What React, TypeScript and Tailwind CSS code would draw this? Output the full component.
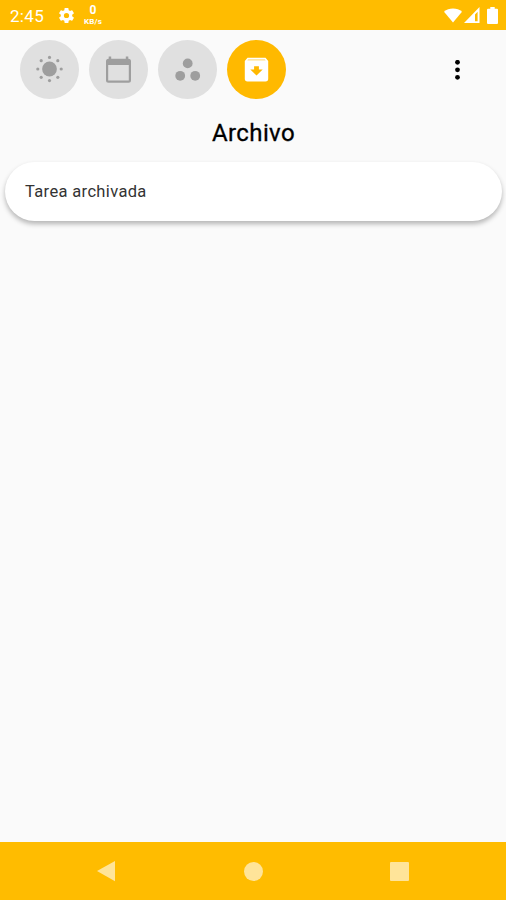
import type { ReactNode } from "react"
import clsx from "clsx"

function StatusBar() {
  return (
    <div className="flex h-[30px] items-center bg-[#ffbc00] pr-2 pl-2.5 text-white">
      <span className="w-[47px] pt-0.5 text-[17px] leading-none tracking-[0.3px]">2:45</span>
      <svg className="mt-px h-[19px] w-[19px]" viewBox="0 0 24 24" fill="currentColor">
        <path d="M19.14 12.94c.04-.3.06-.61.06-.94s-.02-.64-.07-.94l2.03-1.58a.49.49 0 0 0 .12-.61l-1.92-3.32a.49.49 0 0 0-.59-.22l-2.39.96c-.5-.38-1.03-.7-1.62-.94l-.36-2.54a.48.48 0 0 0-.48-.41h-3.84c-.24 0-.43.17-.47.41l-.36 2.54c-.59.24-1.13.57-1.62.94l-2.39-.96a.48.48 0 0 0-.59.22L2.74 8.87c-.12.21-.08.47.12.61l2.03 1.58c-.05.3-.09.63-.09.94s.02.64.07.94l-2.03 1.58a.49.49 0 0 0-.12.61l1.92 3.32c.12.22.37.29.59.22l2.39-.96c.5.38 1.03.7 1.62.94l.36 2.54c.05.24.24.41.48.41h3.84c.24 0 .44-.17.47-.41l.36-2.54c.59-.24 1.13-.56 1.62-.94l2.39.96c.22.08.47 0 .59-.22l1.92-3.32a.48.48 0 0 0-.12-.61l-2.01-1.58zM12 15.3A3.3 3.3 0 1 1 12 8.7a3.3 3.3 0 0 1 0 6.6z" />
      </svg>
      <div className="ml-[7px] flex w-5 flex-col items-center">
        <span className="text-[12px] leading-[14px] font-bold">0</span>
        <span className="text-[8px] leading-[10px] font-bold tracking-[0.2px]">KB/s</span>
      </div>
      <div className="ml-auto flex items-center">
        <svg className="h-[15px] w-[18px]" viewBox="0 0 18 15" fill="currentColor">
          <path d="M9 14.5 0 3.7C2.4 1.7 5.6.5 9 .5s6.6 1.2 9 3.2z" />
        </svg>
        <svg className="ml-0.5 h-4 w-4" viewBox="0 0 16 16" fill="currentColor">
          <path fillRule="evenodd" d="M0 16 15.5 0v16zM11 7.5v6.8h2.6V4.8z" />
        </svg>
        <svg className="ml-[7px] h-[17px] w-[11px]" viewBox="0 0 11 17" fill="currentColor">
          <path d="M3.3 0h4.4v1.7H10a1 1 0 0 1 1 1V16a1 1 0 0 1-1 1H1a1 1 0 0 1-1-1V2.7a1 1 0 0 1 1-1h2.3z" />
        </svg>
      </div>
    </div>
  )
}

function TabButton({ label, active, children }: { label: string; active?: boolean; children: ReactNode }) {
  return (
    <button
      aria-label={label}
      className={clsx(
        "flex h-[59px] w-[59px] items-center justify-center rounded-full",
        active ? "bg-[#ffb900] text-white" : "bg-[#e0e0e0] text-[#9e9e9e]",
      )}
    >
      <svg className="h-[29px] w-[29px]" viewBox="0 0 29 29" fill="currentColor">
        {children}
      </svg>
    </button>
  )
}

function Tabs() {
  return (
    <div className="flex items-center gap-2.5">
      <TabButton label="Hoy">
        <circle cx="14.5" cy="14" r="7.4" />
        <circle cx="14.5" cy="2.4" r="1.6" />
        <circle cx="22.8" cy="5.7" r="1.6" />
        <circle cx="26.2" cy="14" r="1.6" />
        <circle cx="22.8" cy="22.3" r="1.6" />
        <circle cx="14.5" cy="25.6" r="1.6" />
        <circle cx="6.2" cy="22.3" r="1.6" />
        <circle cx="2.8" cy="14" r="1.6" />
        <circle cx="6.2" cy="5.7" r="1.6" />
      </TabButton>
      <TabButton label="Calendario">
        <path
          fillRule="evenodd"
          d="M4.7 1.5h2.5v2.3h14.600V1.5h2.500v2.300h.2a2.500 2.500 0 0 1 2.500 2.500v18.900a2.500 2.500 0 0 1-2.500 2.500H4.500A2.500 2.500 0 0 1 2 25.200V6.300a2.500 2.500 0 0 1 2.500-2.500h.2zM4.200 10v15.500h20.600V10z"
        />
      </TabButton>
      <TabButton label="Grupos">
        <circle cx="14.7" cy="8.4" r="4.9" />
        <circle cx="7.2" cy="20.8" r="4.9" />
        <circle cx="22.2" cy="20.8" r="4.9" />
      </TabButton>
      <TabButton label="Archivo" active>
        <path
          fillRule="evenodd"
          d="M5.5 2.8h18l2.700 3.200v17.700a2.700 2.700 0 0 1-2.700 2.700h-18a2.700 2.700 0 0 1-2.700-2.700V6zM12.100 11.200v3.200H8.300l6.200 6.200 6.200-6.200h-3.800v-3.200z"
        />
        <path d="M6.200 4.300h16.600l.9 1.200H5.300z" fill="#ffdf85" />
      </TabButton>
    </div>
  )
}

function MenuButton() {
  return (
    <button aria-label="Menú" className="flex h-10 w-10 items-center justify-center text-black">
      <svg className="h-5 w-2" viewBox="0 0 8 20" fill="currentColor">
        <circle cx="3.5" cy="2.3" r="2.4" />
        <circle cx="3.5" cy="9.8" r="2.4" />
        <circle cx="3.5" cy="17.3" r="2.4" />
      </svg>
    </button>
  )
}

function NavBar() {
  return (
    <nav className="flex h-[58px] items-center justify-between bg-[#ffbc00] px-[97px] text-[#ffe499]">
      <svg className="h-[21px] w-[19px]" viewBox="0 0 19 21" fill="currentColor">
        <path d="M0 10.1 18 0v20.2z" />
      </svg>
      <div className="h-[19px] w-[19px] rounded-full bg-[#ffe499]" />
      <div className="h-[19px] w-[19px] rounded-[1px] bg-[#ffe499]" />
    </nav>
  )
}

const tasks = ["Tarea archivada"]

export default function App() {
  return (
    <div className="flex h-[900px] w-[506px] flex-col overflow-hidden bg-[#fafafa] font-['Roboto',sans-serif]">
      <StatusBar />
      <header className="flex items-center justify-between pt-[10px] pr-[28px] pl-5">
        <Tabs />
        <MenuButton />
      </header>
      <h1 className="mt-5 pl-px text-center text-[24px] leading-[28px] font-normal tracking-[0.4px] text-black [-webkit-text-stroke:0.3px_black]">
        Archivo
      </h1>
      <main className="flex-1 pt-[15px] pr-1 pl-[5px]">
        {tasks.map((task) => (
          <div
            key={task}
            className="flex h-[59px] items-center rounded-full bg-white pt-px pl-5 text-[16.5px] tracking-[0.35px] text-[#333] shadow-[0_3px_5px_rgba(0,0,0,0.28)]"
          >
            {task}
          </div>
        ))}
      </main>
      <NavBar />
    </div>
  )
}
